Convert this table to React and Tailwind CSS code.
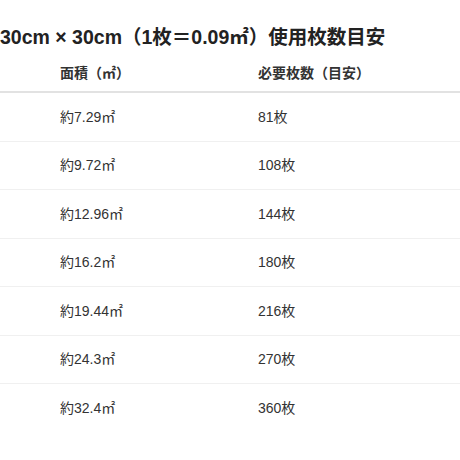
const ROWS = [
  { area: '約7.29㎡', count: '81枚' },
  { area: '約9.72㎡', count: '108枚' },
  { area: '約12.96㎡', count: '144枚' },
  { area: '約16.2㎡', count: '180枚' },
  { area: '約19.44㎡', count: '216枚' },
  { area: '約24.3㎡', count: '270枚' },
  { area: '約32.4㎡', count: '360枚' },
];

export default function App() {
  return (
    <div
      className="h-[460px] w-[460px] overflow-hidden bg-white text-[#333]"
      style={{ fontFamily: '"Liberation Sans", "Noto Sans CJK JP", sans-serif' }}
    >
      <h2 className="mt-[23px] whitespace-nowrap text-[19.5px] font-bold leading-[28px] text-[#222]">
        30cm × 30cm（1枚＝0.09㎡）使用枚数目安
      </h2>
      <table className="mt-[3px] w-full border-collapse text-left text-[14px]">
        <thead>
          <tr className="border-b-2 border-[#e2e2e2]">
            <th className="w-[258px] pb-[8px] pl-[60px] pt-[9px] font-semibold leading-[20px]">面積（㎡）</th>
            <th className="pb-[8px] pt-[9px] font-semibold leading-[20px]">必要枚数（目安）</th>
          </tr>
        </thead>
        <tbody>
          {ROWS.map((row) => (
            <tr key={row.count} className="border-b border-[#f0f0f0] last:border-0">
              <td className="pl-[60px] py-[13.75px] leading-[20px]">{row.area}</td>
              <td className="py-[13.75px] leading-[20px]">{row.count}</td>
            </tr>
          ))}
        </tbody>
      </table>
    </div>
  );
}
